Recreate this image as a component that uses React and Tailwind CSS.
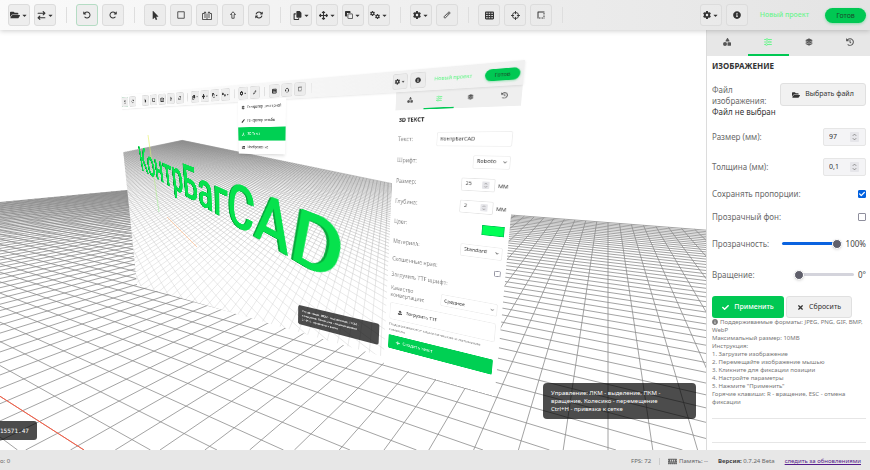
import { useState } from 'react'
import {
  FaBorderStyle,
  FaCaretDown,
  FaCheck,
  FaChevronDown,
  FaFolderOpen,
  FaHistory,
  FaImage,
  FaInfoCircle,
  FaMemory,
  FaMousePointer,
  FaPen,
  FaPlus,
  FaTimes,
  FaUpload,
} from 'react-icons/fa'
import {
  FaArrowRightArrowLeft,
  FaArrowRotateLeft,
  FaArrowRotateRight,
  FaArrowsRotate,
  FaArrowsUpDownLeftRight,
  FaCopy,
  FaFont,
  FaGear,
  FaLayerGroup,
  FaShapes,
  FaSliders,
  FaTableCells,
} from 'react-icons/fa6'

/* ---------- small drawings ---------- */

const line = { fill: 'none', stroke: 'currentColor', strokeWidth: 1.6 }

function SquareIcon() {
  return (
    <svg viewBox="0 0 16 16" className="size-2" {...line}>
      <path d="M1.5 1.5h13v13h-13z" />
    </svg>
  )
}

function ExtrudeIcon() {
  return (
    <svg viewBox="0 0 20 18" className="h-[9px] w-[10px]" {...line}>
      <path d="M5 5H1v12h18V5h-3M6 14V2M10 17V6M14 14V2M3.5 4.5 6 1.5l2.5 3M11.5 4.5 14 1.5l2.5 3" />
    </svg>
  )
}

function UpIcon() {
  return (
    <svg viewBox="0 0 12 16" className="h-2 w-[6px]" {...line}>
      <path d="M6 1.5 11 7H8.3v7.5H3.7V7H1z" />
    </svg>
  )
}

function CloneIcon() {
  return (
    <svg viewBox="0 0 16 16" className="size-2" {...line}>
      <path d="M0 1.5Q0 0 1.5 0h8Q11 0 11 1.5V4H4v7H1.5Q0 11 0 9.5z" fill="currentColor" stroke="none" />
      <rect x="5.800" y="5.800" width="9.400" height="9.400" rx="1" />
    </svg>
  )
}

function GearsIcon() {
  return (
    <span className="flex">
      <FaGear className="size-[5px]" />
      <FaGear className="mt-[3px] size-[5px]" />
    </span>
  )
}

function RulerIcon() {
  return (
    <svg viewBox="0 0 16 16" className="size-2" {...line}>
      <path d="M1.5 12 12 1.500l2.500 2.500L4 14.500zM5 9l1.500 1.500M7.500 6.500 9 8M10 4l1.500 1.500" />
    </svg>
  )
}

function TargetIcon() {
  return (
    <svg viewBox="0 0 16 16" className="size-[9px]" {...line}>
      <circle cx="8" cy="8" r="5.500" />
      <path d="M8 0v5.5M8 10.5V16M0 8h5.5M10.5 8H16" />
    </svg>
  )
}

function Spinner() {
  return (
    <svg viewBox="0 0 9 10" className="h-[10px] w-[9px] rounded-[1px] bg-[#e6e6ea]" fill="none" stroke="#777" strokeWidth="0.8">
      <path d="M2.8 3.8 4.5 2.1l1.7 1.7M2.8 6.2l1.7 1.7 1.7-1.7" />
    </svg>
  )
}

/* ---------- toolbar ---------- */

const TOOL_GROUPS = [
  [
    { label: 'Отменить', icon: <FaArrowRotateLeft />, accent: true },
    { label: 'Повторить', icon: <FaArrowRotateRight /> },
  ],
  [
    { label: 'Выбор', icon: <FaMousePointer className="size-[9px]" /> },
    { label: 'Прямоугольник', icon: <SquareIcon /> },
    { label: 'Выдавить', icon: <ExtrudeIcon /> },
    { label: 'Поднять', icon: <UpIcon /> },
    { label: 'Обновить', icon: <FaArrowsRotate /> },
  ],
  [
    { label: 'Копировать', icon: <FaCopy className="size-[9px]" />, menu: true },
    { label: 'Переместить', icon: <FaArrowsUpDownLeftRight className="size-[9px]" />, menu: true },
    { label: 'Клонировать', icon: <CloneIcon />, menu: true },
    { label: 'Операции', icon: <GearsIcon />, menu: true },
  ],
  [
    { label: 'Генераторы', icon: <FaGear />, menu: true },
    { label: 'Линейка', icon: <RulerIcon /> },
  ],
  [
    { label: 'Сетка', icon: <FaTableCells className="size-[9px]" /> },
    { label: 'Центр', icon: <TargetIcon /> },
    { label: 'Границы', icon: <FaBorderStyle /> },
  ],
]

const FILE_GROUP = [
  { label: 'Файл', icon: <FaFolderOpen className="size-[10px]" />, menu: true },
  { label: 'Обмен', icon: <FaArrowRightArrowLeft className="size-[9px]" />, menu: true },
]

function ToolButton({ label, icon, menu, accent }) {
  return (
    <button
      aria-label={label}
      className={`flex size-[22px] shrink-0 items-center justify-center gap-px rounded-[3px] border bg-[#eaeaea]/80 text-[8px] text-[#333] ${
        accent ? 'border-[#b5dcc4]' : 'border-[#dcdcdc]'
      }`}
    >
      {icon}
      {menu && <FaCaretDown className="size-[7px]" />}
    </button>
  )
}

function Toolbar({ groups, className }) {
  return (
    <header className={`relative z-10 flex h-[30px] shrink-0 items-center pr-1 ${className}`}>
      {groups.map((group, i) => (
        <div key={i} className="flex items-center">
          <div className="flex gap-1">
            {group.map((tool) => (
              <ToolButton key={tool.label} {...tool} />
            ))}
          </div>
          <div className="mr-[9px] ml-[10px] h-4 w-px bg-[#dedede]" />
        </div>
      ))}
      <div className="ml-auto flex items-center gap-1">
        <ToolButton label="Настройки" icon={<FaGear />} menu />
        <ToolButton label="Справка" icon={<FaInfoCircle />} />
        <span className="mx-2 text-[7px] font-medium text-[#6cf58e]">Новый проект</span>
        <button className="ml-1 h-[15px] w-[41px] rounded-full bg-[#00c853] text-[7px] leading-none text-[#1b4a2c] shadow-[0_1px_3px_#00c85366]">
          Готов
        </button>
      </div>
    </header>
  )
}

/* ---------- side panel parts ---------- */

const TABS = [
  { label: 'Фигуры', icon: <FaShapes /> },
  { label: 'Свойства', icon: <FaSliders />, active: true },
  { label: 'Слои', icon: <FaLayerGroup /> },
  { label: 'История', icon: <FaHistory /> },
]

function Tabs({ className = 'bg-[#e7e7e7]' }) {
  return (
    <nav className={`flex h-[26px] ${className}`}>
      {TABS.map(({ label, icon, active }) => (
        <button
          key={label}
          aria-label={label}
          className={`flex flex-1 items-center justify-center border-b-2 text-[8px] ${
            active ? 'border-[#00c853] text-[#6cf58e]' : 'border-transparent text-[#555]'
          }`}
        >
          {icon}
        </button>
      ))}
    </nav>
  )
}

function NumberField({ id, value, className = 'bg-[#f4f4f6]' }) {
  return (
    <div className={`flex h-[18px] w-[43px] items-center rounded-[2px] border border-[#e6e6e6] pr-[6px] pl-[5px] ${className}`}>
      <input id={id} defaultValue={value} inputMode="decimal" className="w-0 flex-1 bg-transparent text-[7px] text-[#333] outline-none" />
      <Spinner />
    </div>
  )
}

function Select({ id, option, className }) {
  return (
    <span className={`relative flex items-center ${className}`}>
      <select id={id} className="h-[18px] w-full appearance-none rounded-[2px] border border-[#eee] bg-white px-1 text-[7px] text-[#333]">
        <option>{option}</option>
      </select>
      <FaChevronDown className="pointer-events-none absolute right-1 size-[5px] text-[#555]" />
    </span>
  )
}

function Slider({ id, value, max, onChange }) {
  const fill = (value / max) * 100
  return (
    <input
      id={id}
      type="range"
      max={max}
      value={value}
      onChange={(e) => onChange(Number(e.target.value))}
      style={{ backgroundImage: `linear-gradient(to right, #0a63e0 ${fill}%, #d4d4dc ${fill}%)` }}
      className="h-[3px] w-[60px] appearance-none rounded-full [&::-webkit-slider-thumb]:size-[10px] [&::-webkit-slider-thumb]:appearance-none [&::-webkit-slider-thumb]:rounded-full [&::-webkit-slider-thumb]:border [&::-webkit-slider-thumb]:border-white [&::-webkit-slider-thumb]:bg-[#5f5f6b] [&::-webkit-slider-thumb]:shadow-sm"
    />
  )
}

function Checkbox({ id, checked, onChange }) {
  return (
    <span className="relative flex size-2">
      <input
        id={id}
        type="checkbox"
        checked={checked}
        onChange={(e) => onChange(e.target.checked)}
        className="size-2 appearance-none rounded-[1px] border border-[#8f8f9d] bg-white checked:border-[#0060df] checked:bg-[#0060df]"
      />
      {checked && <FaCheck className="pointer-events-none absolute inset-px size-[6px] text-white" />}
    </span>
  )
}

function Row({ id, label, className = 'h-[31px]', children }) {
  return (
    <div className={`flex items-center justify-between ${className}`}>
      <label htmlFor={id}>{label}</label>
      <div className="flex items-center gap-1">{children}</div>
    </div>
  )
}

const HELP = [
  'Максимальный размер: 10MB',
  'Инструкция:',
  '1. Загрузите изображение',
  '2. Перемещайте изображение мышью',
  '3. Кликните для фиксации позиции',
  '4. Настройте параметры',
  '5. Нажмите "Применить"',
  'Горячие клавиши: R - вращение, ESC - отмена фиксации',
]

function ImagePanel() {
  const [keepRatio, setKeepRatio] = useState(true)
  const [clearBg, setClearBg] = useState(false)
  const [opacity, setOpacity] = useState(100)
  const [angle, setAngle] = useState(0)

  return (
    <aside className="w-[164px] shrink-0 border-l border-[#dcdcdc] bg-white text-[8px] text-[#6a6a6a]">
      <Tabs />
      <div className="pr-1 pl-[5px]">
        <h2 className="pt-1 leading-3 font-bold text-[#333]">ИЗОБРАЖЕНИЕ</h2>

        <div className="flex justify-between pt-[11px]">
          <div className="pt-px leading-[11px]">
            <p>Файл</p>
            <p>изображения:</p>
            <p className="whitespace-nowrap text-[#333]">Файл не выбран</p>
          </div>
          <button className="flex h-[23px] w-[86px] items-center justify-center gap-[5px] rounded-[3px] border border-[#e0e0e0] bg-[#f1f1f1] text-[7px] text-[#333]">
            <FaFolderOpen className="size-2" />
            Выбрать файл
          </button>
        </div>

        <Row id="size" label="Размер (мм):" className="mt-[5px] h-[30px]">
          <NumberField id="size" value="97" />
        </Row>
        <Row id="depth" label="Толщина (мм):" className="h-[30px]">
          <NumberField id="depth" value="0,1" />
        </Row>
        <Row id="ratio" label="Сохранять пропорции:" className="h-[23px]">
          <Checkbox id="ratio" checked={keepRatio} onChange={setKeepRatio} />
        </Row>
        <Row id="bg" label="Прозрачный фон:" className="h-[23px]">
          <Checkbox id="bg" checked={clearBg} onChange={setClearBg} />
        </Row>
        <Row id="opacity" label="Прозрачность:" className="h-[31px]">
          <Slider id="opacity" value={opacity} max={100} onChange={setOpacity} />
          <output className="text-[#444]">{opacity}%</output>
        </Row>
        <Row id="angle" label="Вращение:" className="h-[31px]">
          <Slider id="angle" value={angle} max={360} onChange={setAngle} />
          <output className="text-[#444]">{angle}°</output>
        </Row>

        <div className="mt-[6px] flex gap-[2px]">
          <button className="flex h-[22px] w-[72px] items-center justify-center gap-[5px] rounded-[3px] bg-[#00c853] text-[7px] font-medium text-white">
            <FaCheck /> Применить
          </button>
          <button className="flex h-[22px] w-[66px] items-center justify-center gap-[5px] rounded-[3px] border border-[#e0e0e0] bg-[#f1f1f1] text-[7px] text-[#333]">
            <FaTimes /> Сбросить
          </button>
        </div>

        <div className="border-b border-[#e6e6e6] pb-3 text-[6px] leading-[8px] text-[#777]">
          <p>
            <FaInfoCircle className="mr-[2px] inline size-[6px]" />
            Поддерживаемые форматы: JPEG, PNG, GIF, BMP, WebP
          </p>
          {HELP.map((text) => (
            <p key={text}>{text}</p>
          ))}
        </div>
        <div className="h-6 border-b border-[#e6e6e6]" />
      </div>
    </aside>
  )
}

function TextPanel() {
  const [bevel, setBevel] = useState(false)

  return (
    <aside className="w-[164px] shrink-0 bg-white text-[8px] text-[#888]">
      <Tabs className="bg-[#efefef]" />
      <div className="px-[6px]">
        <h2 className="pt-2 leading-3 font-bold text-[#333]">3D ТЕКСТ</h2>
        <Row id="t-text" label="Текст:" className="mt-[6px] h-[31px]">
          <input id="t-text" defaultValue="КонтрБагCAD" className="h-5 w-[96px] rounded-[2px] border border-[#eee] px-1 text-[7px] text-[#333]" />
        </Row>
        <Row id="t-font" label="Шрифт:">
          <Select id="t-font" option="Roboto" className="w-[46px]" />
        </Row>
        <Row id="t-size" label="Размер:">
          <NumberField id="t-size" value="25" className="bg-white" />
          <span className="text-[#444]">мм</span>
        </Row>
        <Row id="t-depth" label="Глубина:">
          <NumberField id="t-depth" value="2" className="bg-white" />
          <span className="text-[#444]">мм</span>
        </Row>
        <Row id="t-color" label="Цвет:">
          <button id="t-color" aria-label="Цвет" className="h-[14px] w-7 border border-[#00c853] bg-[#00ff55]" />
        </Row>
        <Row id="t-mat" label="Материал:">
          <Select id="t-mat" option="Standard" className="w-[54px]" />
        </Row>
        <Row id="t-bevel" label="Скошенные края:" className="h-[26px]">
          <Checkbox id="t-bevel" checked={bevel} onChange={setBevel} />
        </Row>
        <p className="h-6 leading-6">Загрузить TTF шрифт:</p>
        <div className="flex h-[30px] items-center justify-between leading-[11px]">
          <label htmlFor="t-quality" className="w-[56px]">
            Качество конвертации:
          </label>
          <Select id="t-quality" option="Среднее" className="w-[76px]" />
        </div>
        <button className="mt-1 flex h-7 w-full items-center gap-[6px] rounded-[3px] border border-[#eee] px-3 text-[7px] text-[#444]">
          <FaUpload /> Загрузить TTF
        </button>
        <p className="mt-1 text-[6px] leading-[9px]">Поддерживаются кириллические и латинские символы</p>
        <button className="mt-1 flex h-[23px] w-full items-center gap-1 rounded-[2px] bg-[#00d053] px-3 text-[7px] text-white">
          <FaPlus /> Создать текст
        </button>
      </div>
    </aside>
  )
}

function Hint() {
  return (
    <p className="absolute right-[10px] bottom-[31px] w-[153px] rounded-[4px] bg-black/70 px-2 py-[6px] text-[6px] leading-[8px] text-white">
      Управление: ЛКМ - выделение, ПКМ - вращение, Колесико - перемещение
      <br />
      Ctrl+H - привязка к сетке
    </p>
  )
}

/* ---------- 3D scene ---------- */

// Projects the plane so that the four src points land on the four dst points.
function quadToQuad(src, dst) {
  const m = []
  src.forEach(([x, y], i) => {
    const [u, v] = dst[i]
    m.push([x, y, 1, 0, 0, 0, -u * x, -u * y, u])
    m.push([0, 0, 0, x, y, 1, -v * x, -v * y, v])
  })
  for (let c = 0; c < 8; c++) {
    let p = c
    for (let r = c + 1; r < 8; r++) if (Math.abs(m[r][c]) > Math.abs(m[p][c])) p = r
    ;[m[c], m[p]] = [m[p], m[c]]
    for (let r = 0; r < 8; r++) {
      if (r === c) continue
      const k = m[r][c] / m[c][c]
      for (let j = c; j < 9; j++) m[r][j] -= k * m[c][j]
    }
  }
  const [a, b, c, d, e, f, g, h] = m.map((row, i) => row[8] / row[i])
  return `matrix3d(${[a, d, 0, g, b, e, 0, h, 0, 0, 1, 0, c, f, 0, 1].join(',')})`
}

function cross([x1, y1], [x2, y2], [x3, y3], [x4, y4]) {
  const d = (x1 - x2) * (y3 - y4) - (y1 - y2) * (x3 - x4)
  const p = x1 * y2 - y1 * x2
  const q = x3 * y4 - y3 * x4
  return [(p * (x3 - x4) - (x1 - x2) * q) / d, (p * (y3 - y4) - (y1 - y2) * q) / d]
}

const seg = ([x1, y1], [x2, y2]) => `M${x1.toFixed(1)} ${y1.toFixed(1)}L${x2.toFixed(1)} ${y2.toFixed(1)}`

// Floor grid with two vanishing points; base(k) gives the near end of a line.
function floor({ va, vb, baseA, baseB, a, b }) {
  let d = ''
  for (let k = a[0]; k <= a[1]; k++) d += seg(cross(va, baseA(k), vb, baseB(b[1])), baseA(k))
  for (let k = b[0]; k <= b[1]; k++) d += seg(cross(vb, baseB(k), va, baseA(a[0])), baseB(k))
  return d
}

const OUTER_GRID = floor({
  va: [608, 145],
  vb: [-393, 145],
  baseA: (k) => [608 + 44.8 * k, 450],
  baseB: (k) => [84 + 66.5 * k, 450],
  a: [-72, 14],
  b: [-3, 52],
})

const INNER_GRID = floor({
  va: [392, 97],
  vb: [64, 116],
  baseA: (k) => [392 + 13 * k, 390],
  baseB: (k) => [170 + 18 * k, 390],
  a: [-109, 8],
  b: [-10, 68],
})

const SCREEN_MATRIX = quadToQuad(
  [[87, 15], [845, 15], [862, 430], [712, 430]],
  [[125, 72], [502, 44], [490, 345], [388, 318]],
)

const LETTERS_MATRIX = quadToQuad(
  [[4, 13], [633, 13], [633, 84], [4, 84]],
  [[138, 116], [347, 196], [331, 252], [142, 140]],
)

const MENU = [
  { label: 'Генератор шестерней', icon: <FaGear /> },
  { label: 'Генератор резьбы', icon: <FaPen /> },
  { label: '3D Текст', icon: <FaFont />, active: true },
  { label: 'Изображение', icon: <FaImage /> },
]

function TiltedScreen() {
  return (
    <div className="absolute top-0 left-0 flex h-[460px] w-[870px] origin-top-left flex-col" style={{ transform: SCREEN_MATRIX }}>
      <Toolbar groups={TOOL_GROUPS} className="ml-[76px] bg-linear-to-r from-white to-[#f0f0f0] shadow-[0_1px_3px_#0000001a]" />
      <div className="flex flex-1">
        <div className="relative flex-1">
          <Hint />
        </div>
        <TextPanel />
      </div>
      <ul className="absolute top-7 left-[409px] z-20 w-[104px] bg-white text-[7px] text-[#444] shadow-md">
        {MENU.map(({ label, icon, active }) => (
          <li key={label} className={`flex h-6 items-center gap-[6px] px-2 whitespace-nowrap ${active ? 'bg-[#00d053] text-white' : ''}`}>
            {icon}
            {label}
          </li>
        ))}
      </ul>
    </div>
  )
}

function Scene() {
  return (
    <main className="relative min-w-0 flex-1 overflow-hidden bg-white">
      <svg viewBox="0 30 706 420" preserveAspectRatio="xMinYMin slice" className="absolute inset-0 size-full" fill="none">
        <defs>
          <clipPath id="screen">
            <path d="M118 100 396 85 388 358 137 285z" />
          </clipPath>
          <linearGradient id="fade" gradientUnits="userSpaceOnUse" x1="240" y1="140" x2="215" y2="270">
            <stop stopColor="#808080" />
            <stop offset="0.5" stopColor="#b0b0b0" />
            <stop offset="1" stopColor="#d4d4d4" />
          </linearGradient>
          <linearGradient id="axis" gradientUnits="userSpaceOnUse" x1="148" y1="135" x2="159" y2="212">
            <stop stopColor="#e8f060" />
            <stop offset="1" stopColor="#9af09a" />
          </linearGradient>
        </defs>
        <path d={OUTER_GRID} stroke="#8c8c8c" strokeWidth="0.8" />
        <path d="M-393 145 84 450" stroke="#ff5a40" />
        <path d="M118 98 525 61 494 389 137 285z" fill="#fff" />
        <g clipPath="url(#screen)">
          <path d={INNER_GRID} stroke="url(#fade)" strokeWidth="0.5" />
        </g>
        <path d="M148 135 159 212" stroke="url(#axis)" strokeWidth="0.6" />
        <path d="M167 217 197 247" stroke="#ffb27a" strokeWidth="0.6" />
      </svg>
      <TiltedScreen />
      <div
        className="absolute top-0 left-0 origin-top-left font-[Roboto,sans-serif] text-[100px] leading-[100px] font-medium whitespace-nowrap text-[#06e24d] [text-shadow:-3px_1px_0_#08a83c]"
        style={{ transform: LETTERS_MATRIX }}
      >
        КонтрБагCAD
      </div>
      <p className="absolute bottom-[10px] left-0 rounded-r-[3px] bg-black/70 py-[6px] pr-2 font-['DejaVu_Sans_Mono',monospace] text-[6px] leading-[7px] text-white">
        15571.47
      </p>
      <Hint />
    </main>
  )
}

function StatusBar() {
  return (
    <footer className="flex h-5 shrink-0 items-center bg-[#e7e7e7] pt-[3px] pr-[9px] text-[6px] text-[#666]">
      <span>о: 0</span>
      <span className="ml-auto">FPS: 72</span>
      <span className="mx-2 h-[7px] w-px bg-[#ccc]" />
      <span className="flex items-center gap-[2px]">
        <FaMemory className="size-[9px]" />
        Память: --
      </span>
      <span className="ml-[10px]">
        <b className="text-[#444]">Версия:</b> 0.7.24 Beta
      </span>
      <a href="#updates" className="ml-[10px] text-[#551a8b] underline">
        следить за обновлениями
      </a>
    </footer>
  )
}

export default function App() {
  return (
    <div className="flex h-screen flex-col overflow-hidden bg-white font-['Noto_Sans',sans-serif]">
      <Toolbar
        groups={[FILE_GROUP, ...TOOL_GROUPS]}
        className="bg-linear-to-r from-[#fafafa] to-[#e4e4e4] pl-2 shadow-[0_1px_5px_#0003]"
      />
      <div className="flex min-h-0 flex-1">
        <Scene />
        <ImagePanel />
      </div>
      <StatusBar />
    </div>
  )
}
